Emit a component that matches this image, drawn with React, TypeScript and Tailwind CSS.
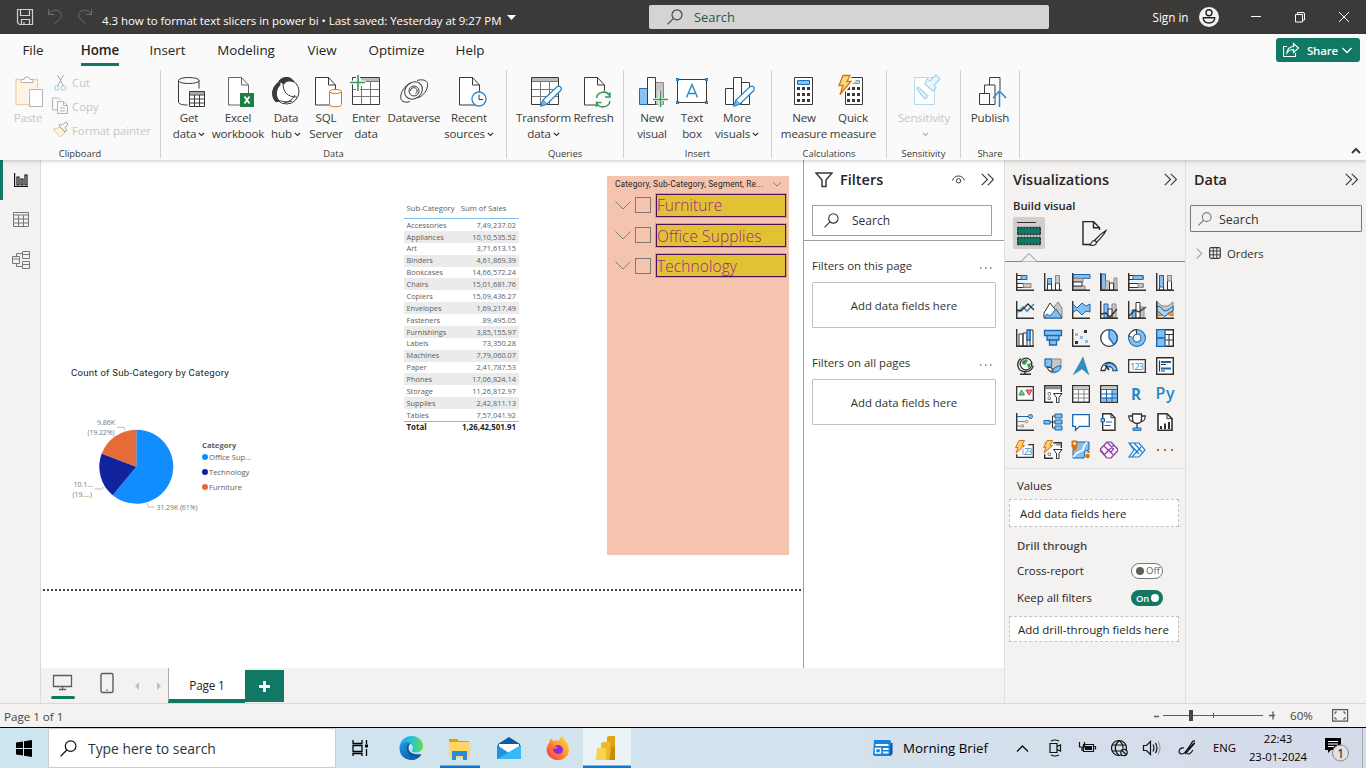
import React from "react";

type IconProps = { w: number; h: number; x?: number; y?: number; stroke?: string; sw?: number; className?: string; children: React.ReactNode };

function Icon({ w, h, x = 0, y = 0, stroke = "#3b3a39", sw = 1, className = "", children }: IconProps) {
  return (
    <svg width={w} height={h} viewBox={`${x} ${y} ${w} ${h}`} fill="none" stroke={stroke} strokeWidth={sw} className={`block shrink-0 ${className}`}>
      {children}
    </svg>
  );
}

function Search({ size = 16, color = "#444" }: { size?: number; color?: string }) {
  return (
    <svg width={size} height={size} viewBox="0 0 16 16" fill="none" stroke={color} strokeWidth="1.15" className="block shrink-0">
      <circle cx="10" cy="5.8" r="5" />
      <path d="M6.4 9.4 0.6 15.3" />
    </svg>
  );
}

const Caret = ({ color = "#333" }: { color?: string }) => (
  <svg width="7" height="5" viewBox="0 0 7 5" fill="none" stroke={color} strokeWidth="1.2" className="ml-0.5 inline-block align-middle">
    <path d="M.8.8 3.5 3.5 6.2.8" />
  </svg>
);

/* ---------- title bar ---------- */

function TitleBar() {
  return (
    <div className="flex h-[34px] shrink-0 items-center bg-[#3b3a39] text-white">
      <Icon w={80} h={20} x={15} y={8} stroke="#d0d0d0" className="ml-[15px]">
        <path d="M17.5 10.500h15v15h-13l-2-2zM20.500 10.500v6h9v-6M21.500 25.500v-5h8v5M24 23v2" strokeWidth="1.2" />
        <path d="M48.500 10v5.500h5.500M48.500 15.500c3-5 8-5 11-3 3 3 2 6-.5 8l-5 5" stroke="#6f6e6d" />
        <path d="M91.500 10v5.500h-5.500M91.500 15.500c-3-5-8-5-11-3-3 3-2 6 .5 8l5 5" stroke="#6f6e6d" />
      </Icon>
      <div className="ml-[7px] mt-[7px] w-[400px] whitespace-nowrap text-[11.5px] leading-[18px] tracking-[-0.05px]">
        4.3 how to format text slicers in power bi <span>•</span> Last saved: Yesterday at 9:27 PM
      </div>
      <Icon w={9} h={6} className="mt-[1px] ml-[5px]"><path d="M0 0h9L4.500 5z" fill="#fff" stroke="none" /></Icon>
      <div className="ml-[133px] flex h-6 w-[400px] items-center rounded-[2px] bg-[#d4d4d2] pl-[18px] text-[#24594f]">
        <Search color="#3b4a47" />
        <span className="ml-[11px] mt-px text-[12.9px]">Search</span>
      </div>
      <span className="ml-[103.500px] w-[39.500px] whitespace-nowrap pt-px text-[11.7px]">Sign in</span>
      <Icon w={20} h={20} className="ml-[7px]">
        <circle cx="10" cy="10" r="10" fill="#f3f2f1" stroke="none" />
        <circle cx="10" cy="5.700" r="3" stroke="#222" strokeWidth="1.400" />
        <path d="M4.300 10.700h11.400c.3 3-2 5.300-5.700 5.300s-6-2.300-5.700-5.300z" stroke="#222" strokeWidth="1.400" />
      </Icon>
      <Icon w={110} h={16} x={1246} y={10} stroke="#fff" className="ml-[27px]">
        <path d="M1251 17.500h10M1295.500 15.500h7v7.500h-7zM1297.500 15v-1.500h5.500q1.500 0 1.500 1.500v6h-1.500M1339 13l10 10M1349 13l-10 10" />
      </Icon>
    </div>
  );
}

/* ---------- ribbon ---------- */

function Tabs() {
  const tabs: [string, string][] = [
    ["File", "w-[66px]"], ["Home", "w-[68px]"], ["Insert", "w-[67px]"], ["Modeling", "w-[90px]"],
    ["View", "w-[62px]"], ["Optimize", "w-[87px]"], ["Help", "w-[60px]"],
  ];
  return (
    <div className="flex h-8 items-center">
      {tabs.map(([t, w]) => (
        <div key={t} className={`${w} flex justify-center pt-px text-[13.4px] tracking-[-0.05px] text-[#252423]`}>
          {t === "Home" ? <span className="-mb-[3px] border-b-[3px] border-[#117865] font-semibold leading-[25px] tracking-[-0.1px]">{t}</span> : t}
        </div>
      ))}
      <div className="ml-auto mr-[6px] flex h-6 w-[84px] items-center rounded-[3px] bg-[#117865] pl-[7px] text-[11.5px] font-semibold tracking-[-0.2px] text-white">
        <Icon w={17} h={16} stroke="#fff">
          <path d="M4 4.500H.5v10h12V11M4 11c0-4 3-6.500 6.500-6.500V1.500L15.500 6l-5 4.500v-3C7.500 7.500 5.500 8.500 4 11z" strokeWidth="1.200" />
        </Icon>
        <span className="ml-[7px] mt-px w-[30px]">Share</span>
        <Icon w={10} h={7} stroke="#fff" className="ml-[5px]"><path d="M.5 1 5 5.500 9.500 1" strokeWidth="1.300" /></Icon>
      </div>
    </div>
  );
}

type ItemProps = { cx: number; w: string; l1: string; l2?: string; caret?: boolean; off?: boolean; children: React.ReactNode };
function Item({ cx, w, l1, l2, caret, off, children }: ItemProps) {
  return (
    <div className={`${w} flex shrink-0 flex-col items-center whitespace-nowrap text-[11.6px] leading-4 tracking-[-0.18px] ${off ? "text-[#c8c6c4]" : "text-[#3b3a39]"}`}>
      <Icon w={36} h={37} x={cx - 18} y={73}>{children}</Icon>
      <div>{l1}</div>
      <div className="min-h-4">{l2}{caret && <Caret color={off ? "#b5b3b1" : "#333"} />}</div>
    </div>
  );
}

function Group({ w, pl, label, children }: { w: string; pl: string; label: string; children: React.ReactNode }) {
  return (
    <div className={`${w} flex h-[88px] shrink-0 flex-col border-r border-[#d2d0ce]`}>
      <div className={`flex h-[73px] shrink-0 pt-[3px] ${pl}`}>{children}</div>
      <div className="h-[15px] text-center text-[9.4px] leading-[22px] text-[#3b3a39]">{label}</div>
    </div>
  );
}

const doc = (x: number) => <path d={`M${x} 77.500h13l7 7.500v20h-20zM${x + 13} 77.500v7.500h7`} fill="#fff" />;

const Pencil = ({ x, y }: { x: number; y: number }) => (
  <g transform={`translate(${x} ${y})`}>
    <path d="M0 20 2 14 16 .8q2-1.300 3.500.2t.2 3.500L6 18z" fill="#fff" stroke="#2b88c9" strokeWidth="1.300" />
    <path d="M0 20 2 14l4 4z" fill="#7dbcec" stroke="#2b88c9" />
  </g>
);

function Ribbon() {
  const off = "flex items-center whitespace-nowrap text-[11.5px] tracking-[-0.1px] text-[#c8c6c4] h-6";
  return (
    <div className="relative z-10 h-[126px] shrink-0 bg-[#fafafa] shadow-[0_1px_4px_rgba(0,0,0,0.22)]">
      <Tabs />
      <div className="mt-[4px] flex">
        <Group w="w-[161px]" pl="pl-[8px]" label="Clipboard">
          <Item cx={29} w="w-[40px]" l1="Paste" off>
            <path d="M21.500 79.500h-4.500v25h13M34 79.500h4.500v9" stroke="#f3cfa3" strokeWidth="1.400" />
            <path d="M19 81v22h10V90h8v-9z" fill="#fdf3e3" stroke="none" />
            <path d="M22 82.500h12v-3h-3q0-2.500-3-2.500t-3 2.500h-3zM30.500 89.500h13v17h-13z" fill="#fff" stroke="#b5b3b1" />
          </Item>
          <div className="-mt-[2px] ml-[4px] flex flex-col">
            <div className={off}>
              <Icon w={20} h={20} stroke="#a6a4a2"><path d="m5.500 2 6 11M11.500 2l-6 11" /><path d="M3 13h4v4h-4zM9.500 13h4v4h-4z" stroke="#a9cfe6" /></Icon>Cut
            </div>
            <div className={off}>
              <Icon w={20} h={20} stroke="#b5b3b1"><path d="M6 13H.5V1h6l2 2M5.500 4.500h6l4 4v8h-10zM11.500 4.500v4h4M8 11h5M8 14h5" /></Icon>Copy
            </div>
            <div className={off}>
              <Icon w={20} h={20} stroke="#a6a4a2"><path d="m1 8 7 8q5-2 5-6l-5-4q-3 2-7 2z" fill="#fdf3e3" stroke="#efc79a" /><path d="m7 5 6 6 2-2-2-2 3-4-2-2-4 3-2-1z" /></Icon>Format painter
            </div>
          </div>
        </Group>
        <Group w="w-[346px]" pl="pl-[8px]" label="Data">
          <Item cx={189} w="w-[40px]" l1="Get" l2="data" caret>
            <path d="M178.500 80.500v22c1 2 5 2.500 9 2.500M199 80.500v8M178.500 80.500c0-4 20.500-4 20.500 0s-20.500 4-20.500 0z" />
            <path d="M189.500 91.500h15v15h-15z" fill="#fff" /><path d="M190 92h14v2.500h-14z" fill="#aaa" stroke="none" /><path d="M189.500 95h15M189.500 99h15M189.500 103h15M194.500 95v11M199.500 95v11" />
          </Item>
          <Item cx={238} w="w-[58px]" l1="Excel" l2="workbook">
            <g stroke="#666">{doc(228.500)}</g><path d="M240 93h14v14h-14z" fill="#1d7f45" stroke="none" /><path d="m244.500 96.500 5 7M249.500 96.500l-5 7" stroke="#fff" strokeWidth="1.800" />
          </Item>
          <Item cx={286} w="w-[38px]" l1="Data" l2="hub" caret>
            <circle cx="286.500" cy="91.500" r="12.500" fill="#fff" />
            <path d="M279 81c4-5 12-5 15 1-5-2-8-1-10 2zM280 82c-8 3-10 14-4 20l3-1c-4-5-3-12 1-16z" fill="#3b3a39" />
            <path d="M283 83c0 9 4 14 14 14M284 103c5-1 9-4 11-8M278 100c3 1 9 3 14 1" />
          </Item>
          <Item cx={326} w="w-[42px]" l1="SQL" l2="Server">
            {doc(315.500)}
            <path d="M329.500 91.500v13c0 3 12 3 12 0v-13" fill="#fff" stroke="#d9730d" /><ellipse cx="335.500" cy="91.500" rx="6" ry="2" fill="#fff" stroke="#d9730d" />
          </Item>
          <Item cx={366} w="w-[38px]" l1="Enter" l2="data">
            <path d="M352.500 77.500h27v27h-27z" fill="#fff" /><path d="M361 78h18v3.500h-18z" fill="#bbb" stroke="none" />
            <path d="M361 81.500h18M353 89.500h26M353 96.500h26M361.500 86v18M370.500 82v22" stroke="#777" />
            <path d="M358 74v17M349.500 82.500h16" stroke="#fafafa" strokeWidth="4" /><path d="M358 75v16M350 82.500h15" stroke="#3a9b57" strokeWidth="1.600" />
          </Item>
          <Item cx={414} w="w-[58px]" l1="Dataverse">
            <ellipse cx="413.500" cy="90.500" rx="9.500" ry="8" transform="rotate(-40 413.500 90.500)" />
            <path d="M417 80.500c5-1.500 10-.5 10.500 3 .8 6-4 12.500-10 14.500M410 101.500c-4 1.500-8.500.5-9.200-3-.8-6 4-13 10.200-15.500" />
            <circle cx="414" cy="91" r="5" /><path d="M410.500 91a3.300 3.300 0 1 1 5 2.800" />
          </Item>
          <Item cx={469} w="w-[52px]" l1="Recent" l2="sources" caret>
            {doc(459.500)}
            <circle cx="479" cy="99" r="7" fill="#fff" stroke="#2b88c9" strokeWidth="1.300" /><path d="M479 94.500V99.500h4" />
          </Item>
        </Group>
        <Group w="w-[117px]" pl="pl-[8px]" label="Queries">
          <Item cx={543} w="w-[57px]" l1="Transform" l2="data" caret>
            <path d="M530.500 77.500h27v27h-27z" fill="#fff" /><path d="M531 78h26v3.500h-26z" fill="#bbb" stroke="none" /><path d="M531 81.500h26M531 89.500h26M531 96.500h26M539.500 82v22M548.500 82v22" stroke="#777" />
            <Pencil x={540} y={86} />
          </Item>
          <Item cx={593} w="w-[43px]" l1="Refresh">
            {doc(583.500)}
            <circle cx="602" cy="99.500" r="9" fill="#fafafa" stroke="none" />
            <path d="M595.500 98c1-7 11-8 13.500-1.500M609 92.500v4.500h-5M609 101c-1 7-11 8-13.500 1.500M595.500 107v-4.500h5" stroke="#3a9b57" strokeWidth="1.500" />
          </Item>
        </Group>
        <Group w="w-[148px]" pl="pl-[11px]" label="Insert">
          <Item cx={652} w="w-[34px]" l1="New" l2="visual">
            <path d="M639.500 88.500h8v16h-8z" fill="#8cc0ef" stroke="#1a6fb8" /><path d="M655.500 82.500h8v22h-8z" fill="#c8c6c4" stroke="#888" /><path d="M647.500 77.500h8v27h-8z" fill="#fff" />
            <path d="M660 91v16M652.500 99.500h15" stroke="#fafafa" strokeWidth="3" /><path d="M660.500 91v16M653 99.500h15" stroke="#3a9b57" strokeWidth="1.500" />
          </Item>
          <Item cx={692} w="w-[46px]" l1="Text" l2="box">
            <path d="M677.500 79.500h29v23h-29z" fill="#fff" /><path d="m686.500 97.500 5.500-13 5.500 13M688.500 93.500h7" stroke="#2b88c9" strokeWidth="1.400" />
            <path d="M676 78h3v3h-3zM705 78h3v3h-3zM676 101h3v3h-3zM705 101h3v3h-3z" fill="#1b86d4" stroke="none" />
          </Item>
          <Item cx={737} w="w-[44px]" l1="More" l2="visuals" caret>
            <path d="M725.500 88.500h8v16h-8zM741.500 82.500h8v22h-8zM733.500 77.500h8v27h-8z" fill="#fff" />
            <Pencil x={734} y={86} />
          </Item>
        </Group>
        <Group w="w-[115px]" pl="pl-[8px]" label="Calculations">
          <Item cx={804} w="w-[48px]" l1="New" l2="measure">
            <path d="M794.500 77.500h18v27h-18z" fill="#fff" /><path d="M797.500 80.500h12v4h-12z" fill="#8cc0ef" stroke="#1a6fb8" />
            <path d="M797 88.500h13M797 94.500h13M797 100.500h13" strokeDasharray="3 2" strokeWidth="3" />
          </Item>
          <Item cx={853} w="w-[50px]" l1="Quick" l2="measure">
            <path d="M845.500 77.500h17v27h-17z" fill="#fff" /><path d="M850.500 80.500h9v3h-9z" fill="#ccc" stroke="#999" />
            <path d="M847 88.500h13M847 94.500h13M847 100.500h13" strokeDasharray="3 2" strokeWidth="3" />
            <path d="M843 75.500h7l-3 6h5l-12 13 3-9h-4z" fill="#fde49c" stroke="#fafafa" strokeWidth="4" /><path d="M843 75.500h7l-3 6h4l-11 13 3-9h-4z" fill="#fbd982" stroke="#d9730d" strokeWidth="1.300" />
          </Item>
        </Group>
        <Group w="w-[74px]" pl="pl-[7px]" label="Sensitivity">
          <Item cx={923} w="w-[60px]" l1="Sensitivity" off caret>
            <path d="M913.500 77.500h20v27h-20z" stroke="#b5d9ee" fill="#fff" /><path d="m917 87 10 9-3 3-8-10zM924 84l8 7 3-3-2-3 6-6-4-4-6 6-3-2z" stroke="#a9d3ec" fill="#eaf5fb" strokeWidth="1.300" />
          </Item>
        </Group>
        <Group w="w-[59px]" pl="pl-[4px]" label="Share">
          <Item cx={990} w="w-[50px]" l1="Publish">
            <path d="M979.500 93.500h10v11h-10zM984.500 93v-8h10.500v19.500h-5.500M989.500 85v-7.500h10.500v13" /><path d="M999.500 107V92M993 98l6.500-7 6.500 7" stroke="#2b88c9" strokeWidth="1.500" />
          </Item>
        </Group>
        <Icon w={10} h={7} className="ml-auto mr-[5px] mt-[77px]"><path d="m1 6 4-4 4 4" strokeWidth="2" /></Icon>
      </div>
    </div>
  );
}

/* ---------- report canvas ---------- */

const sales: [string, string][] = [
  ["Accessories", "7,49,237.02"], ["Appliances", "10,10,535.52"], ["Art", "3,71,613.15"], ["Binders", "4,61,869.39"],
  ["Bookcases", "14,66,572.24"], ["Chairs", "15,01,681.76"], ["Copiers", "15,09,436.27"], ["Envelopes", "1,69,217.49"],
  ["Fasteners", "89,495.05"], ["Furnishings", "3,85,155.97"], ["Labels", "73,350.28"], ["Machines", "7,79,060.07"],
  ["Paper", "2,41,787.53"], ["Phones", "17,06,824.14"], ["Storage", "11,26,812.97"], ["Supplies", "2,42,811.13"], ["Tables", "7,57,041.92"],
];

function SalesTable() {
  return (
    <div className="absolute left-[363px] top-[41px] w-[115px] text-[7.4px] text-[#605e5c]">
      <div className="flex h-[18px] items-start justify-between whitespace-nowrap border-b border-[#7fbdf0] pl-[2.500px] pr-[12.500px] text-[7.7px] leading-[15px]">
        <span>Sub-Category</span><span>Sum of Sales</span>
      </div>
      {sales.map(([k, v], i) => (
        <div key={k} className={`flex h-[11.88px] items-center justify-between pl-[2.500px] pr-[3px] pt-[0.500px] leading-[11px] ${i % 2 ? "bg-[#ebebeb]" : ""}`}>
          <span>{k}</span><span>{v}</span>
        </div>
      ))}
      <div className="flex h-[13px] items-center justify-between border-t border-[#7fbdf0] pl-[2.500px] pr-[3px] text-[7.900px] font-bold text-[#252423]">
        <span>Total</span><span>1,26,42,501.91</span>
      </div>
    </div>
  );
}

function PieChart() {
  const leg: [string, string][] = [["#118dff", "Office Sup..."], ["#12239e", "Technology"], ["#e66c37", "Furniture"]];
  return (
    <div className="absolute left-[19px] top-[200px] h-[160px] w-[210px]">
      <div className="pl-[11px] pt-[5px] font-['Roboto'] text-[9.6px] leading-[15px] tracking-[0.26px] text-[#252423]">Count of Sub-Category by Category</div>
      <div className="flex">
        <Icon w={141} h={110} x={60} y={410} className="mt-[30px]">
          <g transform="translate(136.300 466.700)" stroke="none">
            <path d="M0 0V-37A37 37 0 1 1-23.600 28.500z" fill="#118dff" />
            <path d="M0 0-23.600 28.500A37 37 0 0 1-34.600-13.100z" fill="#12239e" />
            <path d="M0 0-34.600-13.100A37 37 0 0 1 0-37z" fill="#e66c37" />
          </g>
          <path d="M117 427.300h7l1 3M94.500 489h7l3-2M147 503l1.500 4h6" stroke="#bbb" />
          <g fill="#777" stroke="none" fontSize="7" fontFamily="Open Sans">
            <text x="97" y="425" textLength="18">9.86K</text><text x="87.500" y="435" textLength="27">(19.22%)</text>
            <text x="73.500" y="487">10.1...</text><text x="72.500" y="497">(19....)</text><text x="156.500" y="510" textLength="41">31.29K (61%)</text>
          </g>
        </Icon>
        <div className="ml-px mt-[57.500px] text-[7.6px] leading-[15px] text-[#605e5c]">
          <div className="mb-[-3px] font-bold tracking-[0.05px]">Category</div>
          {leg.map(([c, t]) => (
            <div key={t} className="flex items-center whitespace-nowrap"><span className="mr-px h-[6px] w-[6px] shrink-0 rounded-full" style={{ background: c }} />{t}</div>
          ))}
        </div>
      </div>
    </div>
  );
}

function Slicer() {
  return (
    <div className="absolute left-[566px] top-[16px] h-[379px] w-[182px] bg-[#f5c4af]">
      <div className="flex h-[16px] items-center pl-[8px] font-['Roboto'] text-[8.3px] tracking-[0.16px] text-[#252423]">
        <span className="w-[158px] whitespace-nowrap">Category, Sub-Category, Segment, Re...</span>
        <Icon w={8} h={5} stroke="#8a7c76"><path d="m.5.5 3.500 3.500 3.500-3.500" /></Icon>
      </div>
      <div className="flex flex-col gap-[7.300px] pt-[1.500px]">
        {["Furniture", "Office Supplies", "Technology"].map((t) => (
          <div key={t} className="flex items-center pl-[8px]">
            <Icon w={16} h={9} stroke="#7a8280"><path d="m.5.5 7.500 7.500 7.500-7.500" /></Icon>
            <span className="ml-[4px] h-[16px] w-[16px] border border-[#7a7a7a]" />
            <span className="ml-[5px] flex h-[23px] w-[130px] items-center whitespace-nowrap border-[1.500px] border-[#4d0f55] bg-[#e1c233] pt-[2px] text-[15.5px] font-light tracking-[0.08px] text-[#a0209a] outline outline-1 outline-[#cf9f88]">{t}</span>
          </div>
        ))}
      </div>
    </div>
  );
}

function PageTabs() {
  return (
    <div className="flex h-[35px] shrink-0 bg-[#f3f2f1]">
      <Icon w={127} h={35} x={41} y={668} stroke="#605e5c">
        <path d="M53.500 675.500h18v11h-18zM62.500 687v2M59 689.500h7" strokeWidth="1.300" />
        <rect x="51" y="696" width="24" height="3" rx="1.500" fill="#117865" stroke="none" />
        <rect x="101" y="673.500" width="12" height="19" rx="1.500" strokeWidth="1.400" /><path d="M106 690h2" />
        <path d="m139 682-4 4 4 4zM157 682l4 4-4 4z" fill="#c0bfbe" stroke="none" />
      </Icon>
      <div className="flex w-[77px] items-center justify-center border-b-4 border-l border-b-[#117865] border-l-[#aaa] bg-white pt-[4px] text-[11.8px] font-medium tracking-[-0.2px] text-[#252423]">Page 1</div>
      <div className="mt-[2px] flex h-[32px] w-[39px] items-center justify-center bg-[#117865]">
        <Icon w={11} h={11} stroke="#fff"><path d="M5.500 0v11M0 5.500h11" strokeWidth="2.800" /></Icon>
      </div>
    </div>
  );
}

/* ---------- right panes ---------- */

const Collapse = () => <Icon w={13} h={13}><path d="m.8.8 5.700 5.700-5.700 5.700M6.800.8l5.700 5.700-5.700 5.700" strokeWidth="1.150" /></Icon>;

function Filters() {
  return (
    <div className="flex w-[201px] shrink-0 flex-col border-l border-[#a19f9d] bg-white text-[11.4px] text-[#323130]">
      <div className="flex h-[81px] flex-col border-b border-[#a19f9d]">
        <div className="flex h-[39px] items-center pl-[11px]">
          <Icon w={18} h={16}><path d="M1 1h16l-6 7v6.500H7V8z" strokeWidth="1.500" /></Icon>
          <span className="ml-[7px] w-[112px] text-[14.5px] font-semibold text-[#252423]">Filters</span>
          <Icon w={13} h={10}><path d="M.5 5.500C2-.5 11-.5 12.500 5.500" /><circle cx="6.500" cy="5.800" r="2.200" /></Icon>
          <span className="ml-[16px]"><Collapse /></span>
        </div>
        <div className="ml-[8px] mt-[6px] flex h-[31px] w-[180px] items-center border border-[#a19f9d] pl-[11px] text-[12px]">
          <Search size={15} color="#333" /><span className="ml-[13px]">Search</span>
        </div>
      </div>
      {["Filters on this page", "Filters on all pages"].map((t) => (
        <div key={t} className="h-[97px] px-[8px] pt-[15px]">
          <div className="flex h-[19px] items-center justify-between pr-[4px]">{t}
            <Icon w={12} h={3} className="mt-[4px]"><path d="M0 2h12" strokeDasharray="1.500 3.500" stroke="#777" strokeWidth="1.500" /></Icon>
          </div>
          <div className="mt-[7px] flex h-[46px] w-[184px] items-center justify-center rounded-[1px] border border-[#c3c1bf] pt-px">Add data fields here</div>
        </div>
      ))}
    </div>
  );
}

const D = "#323130", B = "#1467b3", F = "#86bfee", G = "#888", LG = "#c8c6c4";
const axes = <path d="M.7 0v17.300H18" stroke={D} strokeWidth="1.400" />;
const bolt = <><path d="M3-.5h6l-3 5h3l-9 8 2.500-6H-.5z" stroke="#f3f2f1" strokeWidth="3" /><path d="M3-.5h5.500l-2.500 5h2.500L0 12l2-5.500h-2.500z" fill="#fbcb72" stroke="#d9730d" /></>;

const visuals: React.ReactNode[] = [
  <>{axes}<path d="M1 2.500h6v4H1zM1 10.500h7v4H1z" fill="#fff" /><path d="M5 2.500h6v4H5z" fill={F} stroke={B} /><path d="M7.500 10.500h7.500v4H7.500z" fill={LG} stroke={G} /></>,
  <>{axes}<path d="M3.500 11h4v6h-4zM11.500 10h4v7h-4z" fill="#fff" /><path d="M3.500 5.500h4V11h-4z" fill={F} stroke={B} /><path d="M11.500 2.500h4V10h-4z" fill={LG} stroke={G} /></>,
  <><path d="M1 1.500h17v3.800H1z" fill={F} stroke={B} /><path d="M1 5.500h10v3.500H1zM1 13h12v4H1z" fill={LG} stroke={G} /><path d="M1 9h9v4H1z" fill="#fff" stroke={D} />{axes}</>,
  <><path d="M1.500 1h4v16h-4z" fill={F} stroke={B} /><path d="M5.500 8h4v9h-4zM14 5h3v12h-3z" fill={LG} stroke={G} /><path d="M9.500 10h4v7h-4z" fill="#fff" stroke={D} />{axes}</>,
  <><path d="M1 2.500h14v4H1zM1 10.500h14v4H1z" fill="#fff" stroke={D} /><path d="M5 2.500h10v4H5z" fill={F} stroke={B} /><path d="M10 10.500h5v4h-5z" fill={LG} stroke={G} />{axes}</>,
  <><path d="M3.500 2.500h4V17h-4zM11.500 2.500h4V17h-4z" fill="#fff" stroke={D} /><path d="M3.500 2.500h4V14h-4z" fill={F} stroke={B} /><path d="M11.500 2.500h4V8h-4z" fill={LG} stroke={G} />{axes}</>,
  <>{axes}<path d="m1 12 6-6 4 4 7-7" stroke="#3994c4" strokeWidth="1.600" /><path d="m1 9 4 1 7-7 6 6" stroke={D} strokeWidth="1.400" /></>,
  <><path d="m7 10 7-9 4 6v10z" fill={LG} stroke={G} /><path d="m0 12 6-10 12 15H0z" fill="#fff" stroke={D} /><path d="m0 17 3-4 3 2 6-7 6 9z" fill={F} stroke={B} /></>,
  <>{axes}<path d="m1 3 4 4 5-5 4 3 4-2v8l-4-1-4 4-5-5-4 2z" fill={F} stroke={B} /></>,
  <><path d="M4 3h4v14H4z" fill={F} stroke={B} /><path d="M12 3h4v14h-4z" fill={LG} stroke={G} /><path d="M8 8h4v9H8z" fill="#fff" />{axes}<path d="m1 13 5-1 4 4 7-8" stroke={D} strokeWidth="1.300" /></>,
  <><path d="M4 9h4v8H4z" fill={F} stroke={B} /><path d="M12 6h4v11h-4z" fill={LG} stroke={G} /><path d="M8 1.500h4V17H8z" fill="#fff" />{axes}<path d="m1 15 6-6 4 2 7-5" stroke={D} strokeWidth="1.300" /></>,
  <><path d="m1 1 5 4h6l5-4v7l-5 2H6L1 6z" fill={LG} stroke={G} /><path d="M1 7q3 0 5 4 5 3 11-5v9q-6-1-8-4-3 5-8 4z" fill="#f0a04b" stroke="#d9730d" /><path d="M1 5q4 0 6 4 3 3 10-4v5q-5 1-7 5-2 1-4-1-2-3-5-4z" fill="#a9d4f6" stroke={B} />{axes}</>,
  <><path d="M3 5h4v12H3zM7 4h4v13H7zM14 1h3v16h-3z" fill="#fff" stroke={D} /><path d="M11 1h3v10h-3z" fill={F} stroke={B} strokeWidth="1.300" />{axes}</>,
  <path d="M.5 1.500h17v5H.5zM3 6.500h12v4.500H3zM5.500 11h7v5h-7z" fill={F} stroke={B} strokeWidth="1.300" />,
  <>{axes}<path d="M12 1h3v3h-3zM3 12h3v3H3z" fill={D} stroke="none" /><path d="M3 4h3v3H3zM8 7h3v3H8zM13 11h3v3h-3z" fill="#86bfee" stroke="none" /></>,
  <><circle cx="9" cy="9" r="8.300" fill="#fff" stroke={D} strokeWidth="1.300" /><path d="M9 .7V9l5 6.500A8.300 8.300 0 0 0 9 .7z" fill={F} stroke={B} strokeWidth="1.300" /></>,
  <><circle cx="9" cy="9" r="6.200" stroke={B} strokeWidth="5.500" /><circle cx="9" cy="9" r="6.200" stroke={F} strokeWidth="3.500" /><path d="M9 2.800A6.200 6.200 0 0 0 3 8" stroke={D} strokeWidth="5.500" /><path d="M8 3A6 6 0 0 0 3.200 7.500" stroke="#fff" strokeWidth="3.500" /></>,
  <><path d="M.7.700h16.600v16.600H.7z" fill="#fff" stroke={D} strokeWidth="1.400" /><path d="M9 5.500h8M9 11h8M13 5.500v11" stroke={D} /><path d="M.7.700H9v16.600H.7zM.7 9H9" fill={F} stroke={B} strokeWidth="1.300" /></>,
  <><path d="M5 1.500C0 5 1 13 7 14.500h4c3 0 6-3 6-6M9 15v2.500M4 17.300h11" stroke={D} strokeWidth="1.400" /><circle cx="10" cy="7" r="5.800" fill="#fff" stroke={D} strokeWidth="1.300" /><path d="M6 4l4-2 2 2-3 4-3-1zM11 7l4-1-1 4-2 1z" fill="#3a9b57" stroke="none" /></>,
  <><path d="M1 2h16v6c0 4-3 7-8 8-4-1-6-4-6-6H1z" fill={LG} stroke={G} /><path d="M1 2h6l1 3-1 5H3L1 8z" fill={F} stroke={B} /><path d="m9 12 5-3h3q0 5-5 6H9z" fill={F} stroke={B} /><path d="m3 10 5 1v4q-4-1-5-5z" fill="#fff" stroke={D} /></>,
  <path d="M11 0 1 18l9-6z M11 0l6 18-7-6z" fill="#2f8fc2" stroke="#2f8fc2" strokeWidth=".4" />,
  <><path d="M1 13.500a8 8 0 0 1 16 0h-4a4 4 0 0 0-8 0z" fill="#fff" stroke={D} strokeWidth="1.300" /><path d="M6 7a8 8 0 0 1 11 6.500h-4a4 4 0 0 0-5-4z" fill={F} stroke={B} /><path d="m5 8 4 5" stroke={D} strokeWidth="2" /></>,
  <><path d="M.7 2.700h16.600v12.600H.7z" fill="#fff" stroke={D} strokeWidth="1.300" /><text x="2" y="12.500" fontSize="9.500" fontFamily="Open Sans" textLength="14" fill="#2b88c9" stroke="none">123</text></>,
  <><path d="M.7.700h16.600v16.600H.7z" fill="#fff" stroke={D} strokeWidth="1.400" /><path d="M3.500 3.500v11" stroke={D} strokeWidth="1.200" /><path d="M5 5h10M5 11.500h10" stroke={B} strokeWidth="1.800" /><path d="M5 7.500h5M5 14h4" stroke={D} /></>,
  <><path d="M.7 1.700h16.600v13.600H.7z" fill="#fff" stroke={D} strokeWidth="1.300" /><path d="m3 10 2.500-5L8.500 10z" fill="#7dc68d" stroke="#2f9950" /><path d="M10 5h6l-3 5z" fill="#f1868a" stroke="#d13438" /></>,
  <><path d="M9 17.300H.7V.7h16.600V7" fill="#fff" stroke={D} strokeWidth="1.400" /><path d="M1 3h16" stroke={G} strokeWidth="2.500" /><path d="M4 7.500h2.500V10H4zM4 12h2.500v2.500H4z" stroke={G} /><path d="M9.500 8.500h8.500l-3 4v5h-2.500v-5z" fill="#fff" stroke={D} /></>,
  <><path d="M.7.700h16.600v16.600H.7z" fill="#fff" stroke={D} strokeWidth="1.400" /><path d="M1.400 2.500h15.200" stroke={LG} strokeWidth="2.500" /><path d="M1 4.500h16M1 9h16M1 13h16M6.500 4.500V17M12 4.500V17" stroke={G} /></>,
  <><path d="M.7.700h16.600v16.600H.7z" fill="#fff" stroke={D} strokeWidth="1.400" /><path d="M1.400 2.500h15.200" stroke={LG} strokeWidth="2.500" /><path d="M12 4.500h5v12h-16v-4h11z" fill={F} stroke="none" /><path d="M1 4.500h16M1 9h16M1 13h16M6.500 4.500V17M12 4.500V17" stroke={B} /></>,
  <text x="3" y="14.500" fontSize="16" fontWeight="700" fontFamily="Open Sans" fill="#2686c6" stroke="none" textLength="10" lengthAdjust="spacingAndGlyphs">R</text>,
  <text x="-.5" y="13.500" fontSize="16" fontWeight="600" fontFamily="Open Sans" fill="#2686c6" stroke="none" textLength="19">Py</text>,
  <>{axes}<path d="M1 3.500h12" stroke={B} /><circle cx="14.500" cy="3.500" r="2" fill={F} stroke={B} /><path d="M1 8.500h8M1 13h4" stroke={G} /><circle cx="10.500" cy="8.500" r="1.300" stroke={G} /><circle cx="6.500" cy="13" r="1.300" stroke={G} /></>,
  <><path d="M6 9h5M11 3H8.500v12H11" stroke={D} /><path d="M0 7.500h6V11H0zM11 1h7v4h-7zM11 7h7v4h-7zM11 13h7v4h-7z" fill={F} stroke={B} /></>,
  <path d="M.7 1.700h16.600v11.600H7.500l-4 4v-4H.7z" fill="#fff" stroke={B} strokeWidth="1.300" />,
  <><path d="M2.700 17.300V.7H11l4 4v12.600z" fill="#fff" stroke={D} strokeWidth="1.400" /><path d="M11 .7v4h4" stroke={D} /><path d="M1 5.500h3.500V9H1z" fill={F} stroke={B} /><path d="M6 9h6M4.500 12.500h6" stroke={B} /></>,
  <><path d="M4.500 1h9v5c0 6-9 6-9 0zM4.500 3H.8c0 4 1 5 4 5.500M13.500 3h3.700c0 4-1 5-4 5.500M9 11v4" fill="#fff" stroke={D} strokeWidth="1.300" /><path d="M5 15h8v2.300H5z" fill={F} stroke={B} /></>,
  <><path d="M2 .7h9l5 5v11.600H2z" fill="#fff" stroke={D} strokeWidth="1.600" /><path d="M11 .7v5h5" stroke={D} /><path d="M4 13h2v3H4zM8 10.500h2V16H8zM12 9h2v7h-2z" fill={D} stroke="none" /></>,
  <><path d="M.7 3.700h16.600v12.600H.7z" fill="#fff" stroke={D} strokeWidth="1.300" /><text x="4" y="13.500" fontSize="9" fontFamily="Open Sans" textLength="12.500" fill="#2b88c9" stroke="none">123</text>{bolt}</>,
  <><path d="M9 17.300H.7V1.700h16.600V7" fill="#fff" stroke={D} strokeWidth="1.400" /><path d="M8 3.500h9" stroke={G} strokeWidth="2" /><path d="M4 12h2.500v2.500H4z" stroke={G} /><path d="M9.500 8.500h8.500l-3 4v5h-2.500v-5z" fill="#fff" stroke={D} />{bolt}</>,
  <><path d="M4 1h13v8l-4 1-1 7H1V9z" fill={F} stroke={B} /><path d="M15 1l-3 4-1 4-6 3-4 4" stroke="#fff" strokeWidth="1.600" /><path d="M0 0h5v6l-2.500 4L0 6z" fill="#d9730d" stroke="#d9730d" /><circle cx="2.500" cy="2.500" r="1.300" fill="#fff" stroke="none" /><circle cx="15.500" cy="15" r="2.300" fill="#d9730d" stroke="none" /><circle cx="16.500" cy="11" r="1.300" fill="#d9730d" stroke="none" /></>,
  <path d="M7 1h4l6.500 7v2L11 17H7L.5 10V8zM4 5l9 8.500M13.500 4.500 4.500 13.500M7 1l6.500 7-2.500 3M.8 9 4 13" fill="#faf2fa" stroke="#8b3da0" strokeWidth="1.200" strokeLinejoin="round" />,
  <path d="M1 2h10l6 7-6 7H1l5-7zM1 2l10 11M6 2l8 9M4 16l9-10" fill="#fff" stroke="#1d7fd0" strokeWidth="1.200" />,
  <path d="M1 8h2v2H1zM8 8h2v2H8zM15 8h2v2h-2z" fill="#ad6a26" stroke="none" />,
];

function Visualizations() {
  return (
    <div className="flex w-[182px] shrink-0 flex-col border-x border-[#e1dfdd] bg-[#f3f2f1] text-[11.4px] text-[#252423]">
      <div className="flex h-[39px] items-center justify-between pl-[8px] pr-[8px] text-[14.5px] font-semibold"><span>Visualizations</span><Collapse /></div>
      <div className="h-[18px] pl-[8px] text-[11.300px] font-semibold leading-[14px]">Build visual</div>
      <div className="flex h-[45px] border-b border-[#8a8886]">
        <div className="relative ml-[8px] flex h-[32px] w-[32px] items-center justify-center rounded-[2px] bg-[#d0cfcd]">
          <Icon w={24} h={26}>
            <path d="M0 2.500h19" stroke={D} /><path d="M.5 7.500h23v7H.5zM.5 17.500h23v7H.5z" fill="#117865" stroke="#222" strokeDasharray="2 1" strokeWidth="1.300" />
          </Icon>
          <Icon w={16} h={9} className="absolute left-[8px] top-[36px]" stroke="#8a8886"><path d="m0 8.500 8-8 8 8" fill="#f3f2f1" /></Icon>
        </div>
        <Icon w={25} h={26} className="ml-[37px] mt-[4px]" stroke="#252423">
          <path d="M8 23.500H1V.6h10.500l6 6.200V9M11.500.6v6.200h6" strokeWidth="1.400" /><path d="M24 9.500c-5 3-9 7-11.500 10l2 1.800C18 18 22 14 24 9.500zM12 19.500c-3 0-1.500 4-5 4 4 2 8 0 7.500-2.500z" fill="#fff" strokeWidth="1.200" />
        </Icon>
      </div>
      <div className="grid grid-cols-[repeat(6,18px)] gap-[10px] pb-[9px] pl-[11px] pt-[11px]">
        {visuals.map((v, i) => <svg key={i} width="18" height="18" viewBox="0 0 18 18" fill="none" stroke="#323130" className="block overflow-visible">{v}</svg>)}
      </div>
      <div className="border-t border-[#e1dfdd] pl-[4px] pr-[6px] pt-[9px]">
        <div className="pl-[8px] leading-[16px]">Values</div>
        <div className="mt-[5px] flex h-[28px] items-center border border-dashed border-[#c3c1bf] bg-white pl-[10px] pt-px">Add data fields here</div>
        <div className="mt-[11px] pl-[8px] font-semibold leading-[16px] text-[#484644]">Drill through</div>
        <div className="flex h-[33px] items-center pl-[8px]">
          <span className="w-[114px]">Cross-report</span>
          <span className="flex h-[16px] w-[32px] items-center rounded-full border border-[#777] bg-white pl-[4px] text-[9.500px] leading-none text-[#605e5c]"><i className="mr-[2px] h-[8px] w-[8px] rounded-full bg-[#605e5c]" /><span className="mt-px">Off</span></span>
        </div>
        <div className="mt-[-2px] flex h-[26px] items-center pl-[8px]">
          <span className="w-[114px]">Keep all filters</span>
          <span className="flex h-[16px] w-[32px] items-center rounded-full bg-[#117865] pl-[5px] text-[9.300px] font-semibold leading-none text-white"><span className="mt-px">On</span><i className="ml-[2px] h-[8px] w-[8px] rounded-full bg-white" /></span>
        </div>
        <div className="mt-[5px] flex h-[26px] items-center whitespace-nowrap border border-dashed border-[#c3c1bf] bg-white pl-[8px] pt-px text-[11.500px]">Add drill-through fields here</div>
      </div>
    </div>
  );
}

function DataPane() {
  return (
    <div className="flex-1 bg-[#f3f2f1] text-[#323130]">
      <div className="flex h-[39px] items-center justify-between pl-[8px] pr-[8px] text-[14.4px] font-semibold text-[#252423]"><span>Data</span><Collapse /></div>
      <div className="ml-[4px] mt-[6px] flex h-[27px] w-[172px] items-center rounded-[1px] border border-[#777] pl-[7px] text-[12.500px]"><Search size={14} color="#666" /><span className="ml-[7px] mt-[3px]">Search</span></div>
      <div className="mt-[11px] flex h-[20px] items-center pl-[10px] text-[11.3px]">
        <Icon w={7} h={11} stroke="#777"><path d="m.8.5 5 5-5 5" /></Icon>
        <Icon w={12} h={12} className="ml-[6px]"><rect x=".7" y=".7" width="10.600" height="10.600" rx="1.500" strokeWidth="1.200" /><path d="M1 4h10M1 7.800h10M4.300 1v10M7.800 1v10" /></Icon>
        <span className="ml-[6px] mt-[2px]">Orders</span>
      </div>
    </div>
  );
}

/* ---------- bottom bars ---------- */

function StatusBar() {
  return (
    <div className="flex h-[25px] shrink-0 items-center border-b border-t border-b-black border-t-[#dcdad8] bg-[#f3f2f1] pl-[4px] text-[11.6px] text-[#484644]">
      <span className="mt-[2px]">Page 1 of 1</span>
      <Icon w={122} h={14} x={1153} y={709} stroke="#605e5c" className="ml-auto">
        <path d="M1154 716.500h5M1269 715.500h8M1273 711.500v8" strokeWidth="1.400" /><path d="M1163 715.500h100M1213.500 713v5" /><path d="M1189 710h4v11h-4z" fill="#484644" stroke="none" />
      </Icon>
      <span className="ml-[15px] w-[42px]">60%</span>
      <Icon w={17} h={13} stroke="#555" className="mr-[17px]"><path d="M.6.600h15v11.500H.6z" strokeWidth="1.200" /><path d="M3 5V3h2M11 3h2v2M13 8v2h-2M5 10H3V8" /></Icon>
    </div>
  );
}

function Taskbar() {
  return (
    <div className="flex h-[40px] shrink-0 items-center bg-gradient-to-r from-[#cde5ed] via-[#d2e4ef] to-[#d6dbea] text-black">
      <div className="flex w-[48px] justify-center"><Icon w={16} h={17}><path d="M0 2.500 7 1.500V8H0zM8 1.300 16 0v8H8zM0 9h7v6.500l-7-1zM8 9h8v8l-8-1.300z" fill="#000" stroke="none" /></Icon></div>
      <div className="flex h-[40px] w-[288px] items-center border border-[#c8cfd2] bg-white pl-[11px] text-[13.900px] text-[#333]"><Search size={17} color="#111" /><span className="ml-[11px] mt-[2px]">Type here to search</span></div>
      <div className="flex w-[48px] justify-center">
        <Icon w={18} h={16} stroke="#000"><path d="M2 0v3.500h9V0M2 5.500h9v6H2zM2 16v-2.500h9V16M15.500 0v4M15.500 9v7" strokeWidth="1.300" /><path d="M14 4.500h3v3h-3z" fill="#000" stroke="none" /></Icon>
      </div>
      <svg width="247" height="40" viewBox="384 728 247 40" className="block shrink-0">
        <defs>
          <linearGradient id="ea" x1="0" y1="0" x2="1" y2="0"><stop stopColor="#1f9fe8" /><stop offset=".5" stopColor="#27c3d8" /><stop offset="1" stopColor="#62db4c" /></linearGradient>
          <linearGradient id="eb" x1="0" y1="0" x2="1" y2="1"><stop stopColor="#1d9ae3" /><stop offset="1" stopColor="#0b4f9e" /></linearGradient>
          <linearGradient id="ff" x1="1" y1="0" x2="0" y2="1"><stop stopColor="#ffe23d" /><stop offset=".5" stopColor="#ff9328" /><stop offset="1" stopColor="#f2254f" /></linearGradient>
        </defs>
        <path d="M583 728h48v40h-48z" fill="#e9f3f6" />
        <path d="M440 765.500h40v2.500h-40zM583 765.500h48v2.500h-48z" fill="#0b78d4" />
        <path d="M399.500 747c1-7 6-11 12-11 7 0 11.500 5 11.500 10 0 4-3 6.500-7 6.500-3 0-5-1-4-2.500 2-3 0-6-3-6.500-4-.5-8 1-9.500 3.500z" fill="url(#ea)" />
        <path d="M399.500 747c2-4 7-6 11-4-4 1-5 5-4 8 2 5 8 7 15 3-2 4-6 6-10 6-7 0-12.500-5-12-13z" fill="url(#eb)" />
        <path d="M406.500 751c-1-4 0-7 4-8-5 6 0 13 11 11-5 5-13 3-15-3z" fill="#0c59a4" />
        <path d="M449 739h8l2 2h10v4h-20z" fill="#dca10a" /><path d="M449 742h21v16h-21z" fill="#ffd666" /><path d="M452 760v-9h15v9h-4v-4h-7v4z" fill="#2a8ae0" />
        <path d="m498 744 11-7 11 7v3h-22z" fill="#0a5aa8" /><path d="M499 744h20v8h-20z" fill="#fff" /><path d="m497 745 12 8 12-8v14h-24z" fill="#1e92e0" /><path d="m521 745-24 14h24z" fill="#3ab6f2" />
        <path d="M549 743c-6 9 1 17 9 17 9 0 13-8 10-15-1-4-5-5-6-9-2 2-3 4-3 5-2-1-4-1-5 0-2-1-3-2-3-3z" fill="url(#ff)" /><circle cx="558" cy="750" r="5" fill="#8a2be2" /><path d="M549 743c3 3 6 2 9 5l-5 1c0 4 5 7 9 3-2 8-15 5-13-9z" fill="#ff7139" />
        <path d="M609 736h6v24h-8v-22q0-2 2-2z" fill="#e0a517" /><path d="M604 742h6v18h-9v-16q0-2 3-2z" fill="#edbb25" /><path d="M597 748h7q2 0 2 2v10h-9q-2 0-1-2z" fill="#f6d354" /><path d="m612 746 3 2v12h-6z" fill="#c98b0c" />
      </svg>
      <Icon w={21} h={17} className="ml-[241px]"><path d="M2 0h15q2 0 2 2v14H3q-2 0-2-2z" fill="#1584dc" stroke="none" /><path d="M19 3h1.500v11L18 16z" fill="#0b4f9e" stroke="none" /><path d="M3.500 5h13M11 9h5.500M11 12.500h5.500" stroke="#fff" strokeWidth="2" /><path d="M3.500 8.500h5v4.500h-5z" stroke="#fff" strokeWidth="1.500" /></Icon>
      <span className="ml-[10px] mt-px w-[112px] whitespace-nowrap text-[13.300px]">Morning Brief</span>
      <Icon w={180} h={22} x={1015} y={737} stroke="#111" sw={1.2}>
        <path d="m1017 751.500 5.500-5.500 5.500 5.500" strokeWidth="1.400" />
        <path d="M1050 743.500h7v9h-7zM1057 746.500l3.500-1.500v6l-3.500-1.500M1051 741q4-2 8 0M1051 755q4 2 8 0" />
        <path d="M1083.500 744.500h10v7h-10zM1094 746.500h1.500v3M1079.500 742v5h5v-5M1082 747v4" /><path d="M1085 746h7v4h-7z" fill="#111" stroke="none" />
        <circle cx="1119" cy="748" r="7.500" /><path d="M1112 745h14M1112 751h9M1119 740.500c-5 5-5 10 0 15M1119 740.500c3 2 4 5 4 8" /><circle cx="1124" cy="752.500" r="3.200" fill="#d5dfec" /><path d="m1122 750.500 4 4" />
        <path d="M1143.500 745.500h3l4-4v13l-4-4h-3zM1153 744.500q2 3 0 7M1155.500 743q3 5 0 10" /><path d="M1158 741.500q4 6 0 13" stroke="#999" />
        <path d="M1184 748c-5-1-7 6-2 6 4 0 9-11 11-13 2-1 3 1 1 3l-9 10M1188 750l6-7M1187 753q2 3 6-3" />
      </Icon>
      <span className="ml-[18px] w-[26px] text-[11.300px]">ENG</span>
      <div className="-ml-[2px] w-[82px] text-center text-[11.300px] leading-[18px] tracking-[-0.1px]">22:43<br />23-01-2024</div>
      <Icon w={26} h={26} className="ml-[6px] mt-[4px]"><path d="M0 1h16v12H6l-3 3v-3H0z" fill="#000" stroke="none" /><path d="M3 4.500h10M3 7h10M3 9.500h6" stroke="#fff" /><circle cx="15.500" cy="16" r="8" fill="#e0e0e2" stroke="#888" /><text x="12.300" y="20.500" fontSize="12" fontFamily="Open Sans" fill="#000" stroke="none">1</text></Icon>
      <span className="ml-auto mr-[3px] h-[40px] w-px bg-[#a9b0bc]" />
    </div>
  );
}

export default function App() {
  return (
    <div className="flex h-[768px] w-[1366px] flex-col overflow-hidden bg-[#f3f2f1] font-['Open_Sans',sans-serif]">
      <TitleBar />
      <Ribbon />
      <div className="flex h-[543px] shrink-0">
        <div className="w-[41px] shrink-0 border-r border-[#dcdad8] bg-[#f3f2f1]">
          <Icon w={40} h={120} x={0} y={160} stroke="#797775">
            <path d="M0 160h3v40H0z" fill="#117865" stroke="none" />
            <path d="M14.600 173v13.500H28M17 177h2v8h-2zM21 179h2v6h-2zM25 175h2v10h-2z" stroke="#111" strokeWidth="1.200" />
            <path d="M13.500 212.500h15v14h-15zM13.500 215h15M13.500 219h15M13.500 223h15M18.500 215v11M23.500 215v11" />
            <path d="M12.500 256.500h7v7h-7zM22.500 251.500h7v7h-7zM22.500 261.500h7v7h-7zM12.500 259h7M22.500 254.500h7M22.500 264.500h7M16.500 256v-2.500h6M16.500 264v2.500h6" />
          </Icon>
        </div>
        <div className="flex w-[963px] shrink-0 flex-col">
          <div className="flex h-[508px]">
            <div className="relative w-[762px] shrink-0 bg-white">
              <PieChart />
              <SalesTable />
              <Slicer />
              <div className="absolute left-[2px] top-[429px] h-[2px] w-[759px] bg-[repeating-linear-gradient(90deg,#444_0_2px,transparent_2px_4px)]" />
            </div>
            <Filters />
          </div>
          <PageTabs />
        </div>
        <Visualizations />
        <DataPane />
      </div>
      <StatusBar />
      <Taskbar />
    </div>
  );
}
